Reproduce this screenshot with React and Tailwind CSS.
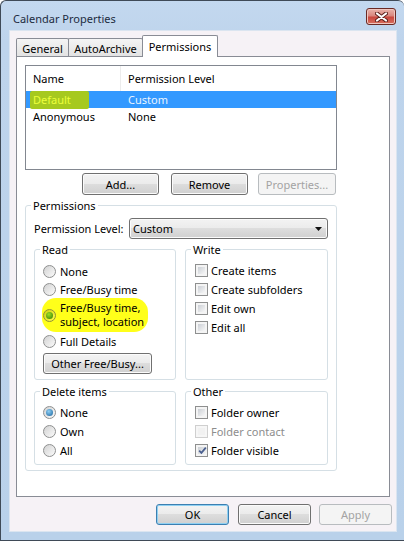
import React from 'react'

function CloseButton() {
  return (
    <div className="mt-[7px] mr-[1px] w-[30px] h-[17px] rounded-[3px] border border-[#6b2a24] bg-[linear-gradient(#e9b3ab_0%,#d9877e_45%,#c9483f_55%,#d8705f_100%)] flex items-center justify-center shadow-[inset_0_0_0_1px_#efc6bf]">
      <svg width="13" height="10" viewBox="0 0 13 10">
        <path d="M2 1.5L11 8.5M11 1.5L2 8.5" stroke="#5a1f1a" strokeWidth="4" strokeLinecap="round" />
        <path d="M2 1.5L11 8.5M11 1.5L2 8.5" stroke="#ffffff" strokeWidth="2.2" strokeLinecap="round" />
      </svg>
    </div>
  )
}

function Button({ children, disabled, isDefault, className = '' }) {
  let look =
    'border-[#707070] bg-[linear-gradient(#f3f3f3_0%,#ebebeb_49%,#dddddd_50%,#d0d0d0_100%)] shadow-[inset_0_0_0_1px_#fbfbfb] text-black'
  if (disabled) look = 'border-[#b8bcbf] bg-[#f4f4f4] text-[#a3a3a3]'
  if (isDefault)
    look =
      'border-[#3c7fb1] bg-[linear-gradient(#f3f3f3_0%,#ebebeb_49%,#dddddd_50%,#d0d0d0_100%)] shadow-[inset_0_0_0_1px_#8fd0f2] text-black'
  return (
    <div className={`flex items-center justify-center rounded-[3px] border ${look} ${className}`}>
      {children}
    </div>
  )
}

function Radio({ checked, tint }) {
  const ring = tint
    ? 'border-[#8e8f3a] bg-[linear-gradient(135deg,#cfcf10,#ffff50)]'
    : 'border-[#8e8f8f] bg-[linear-gradient(135deg,#d2d2d2,#fbfbfb)]'
  const dot = tint
    ? 'bg-[radial-gradient(circle_at_40%_35%,#9ee020,#2f7a08)]'
    : 'bg-[radial-gradient(circle_at_40%_35%,#8fd0f5,#17609a)]'
  return (
    <span className={`w-[13px] h-[13px] shrink-0 rounded-full border flex items-center justify-center ${ring}`}>
      {checked && <span className={`w-[7px] h-[7px] rounded-full ${dot}`} />}
    </span>
  )
}

function Checkbox({ checked, disabled }) {
  return (
    <span
      className={`w-[13px] h-[13px] shrink-0 border p-[2px] flex ${
        disabled ? 'border-[#cfcfcf] bg-[#f6f6f6]' : 'border-[#8e8f8f] bg-[#f4f4f4]'
      }`}
    >
      <span
        className={`flex-1 flex items-center justify-center ${
          disabled ? 'bg-[#f1f1f1]' : 'bg-[linear-gradient(135deg,#cbcfd5,#f7f7f7)]'
        }`}
      >
        {checked && (
          <svg width="9" height="9" viewBox="0 0 9 9" className="shrink-0">
            <path d="M1.2 4.6L3.4 6.9L7.8 1.6" fill="none" stroke="#4a5f8f" strokeWidth="1.7" />
          </svg>
        )}
      </span>
    </span>
  )
}

function Group({ label, className = '', children }) {
  return (
    <fieldset className={`border border-[#d5dfe5] rounded-[3px] ${className}`}>
      <legend className="ml-[5px] px-[2px] leading-[15px]">{label}</legend>
      {children}
    </fieldset>
  )
}

function RadioRow({ label, checked }) {
  return (
    <div className="h-[19px] flex items-center gap-[4px]">
      <Radio checked={checked} />
      <span>{label}</span>
    </div>
  )
}

function CheckRow({ label, checked, disabled }) {
  return (
    <div className={`h-[19px] flex items-center gap-[3px] ${disabled ? 'text-[#8d8d8d]' : ''}`}>
      <Checkbox checked={checked} disabled={disabled} />
      <span>{label}</span>
    </div>
  )
}

export default function App() {
  return (
    <div className="w-[404px] h-[542px] bg-white text-[11px] leading-[15px] text-black font-['Noto_Sans',sans-serif]">
      <div className="h-[541px] flex flex-col border border-r-0 border-[#3f4a57] rounded-t-[6px] bg-[linear-gradient(#c3d8ef,#bed4ec_40px,#b9d1ea)] pl-[8px] pr-[7px] pb-[8px]">
        {/* title bar */}
        <div className="h-[29px] shrink-0 flex items-start justify-between">
          <span className="pl-[4px] pt-[10px] text-[#1c2b3e]">Calendar Properties</span>
          <CloseButton />
        </div>

        {/* client area */}
        <div className="flex-1 flex flex-col border border-[#dbe5f0] bg-[#f6f2f6] pl-[6px] pt-[4px]">
          {/* tabs */}
          <div className="h-[21px] flex items-end">
            <div className="w-[53px] h-[18px] pt-[2px] flex items-center justify-center border border-b-0 border-[#898c95] rounded-t-[2px] bg-[linear-gradient(#f4f4f4,#e3e3e3)]">
              General
            </div>
            <div className="-ml-px w-[75px] h-[18px] pt-[2px] flex items-center justify-center border border-b-0 border-[#898c95] rounded-t-[2px] bg-[linear-gradient(#f4f4f4,#e3e3e3)]">
              AutoArchive
            </div>
            <div className="relative z-10 -ml-px -mb-px w-[76px] h-[22px] flex items-center justify-center border border-b-0 border-[#898c95] rounded-t-[2px] bg-white">
              Permissions
            </div>
          </div>

          {/* tab panel */}
          <div className="w-[374px] h-[441px] border border-[#898c95] bg-white pl-[8px] pt-[8px] flex flex-col">
            {/* list */}
            <div className="w-[312px] h-[105px] border border-[#828790] bg-white">
              <div className="h-[25px] flex items-center">
                <div className="w-[95px] h-full pl-[7px] flex items-center border-r border-[#ececec]">Name</div>
                <div className="pl-[7px]">Permission Level</div>
              </div>
              <div className="h-[17px] flex items-center bg-[#3399ff] text-[#eaf4ff]">
                <div className="w-[95px] pl-[4px] flex items-center">
                  <span className="h-[18px] pl-[3px] pr-[18px] flex items-center bg-[#a6c91f] text-[#ecff3c] rounded-[2px]">
                    Default
                  </span>
                </div>
                <div className="pl-[7px]">Custom</div>
              </div>
              <div className="h-[17px] flex items-center">
                <div className="w-[95px] pl-[7px]">Anonymous</div>
                <div className="pl-[7px]">None</div>
              </div>
            </div>

            {/* list buttons */}
            <div className="w-[312px] mt-[3px] flex justify-end">
              <Button className="w-[77px] h-[22px] mr-[12px]">Add...</Button>
              <Button className="w-[77px] h-[22px] mr-[10px]">Remove</Button>
              <Button disabled className="w-[78px] h-[22px] mr-[1px]">Properties...</Button>
            </div>

            {/* permissions group */}
            <Group label="Permissions" className="w-[312px] mt-[3px]">
              <div className="pb-[5px]">
                <div className="mt-[5px] pl-[8px] flex items-center">
                  <span>Permission Level:</span>
                  <div className="ml-auto mr-[8px] w-[199px] h-[21px] rounded-[3px] border border-[#707070] bg-[linear-gradient(#f3f3f3_0%,#ebebeb_49%,#dddddd_50%,#d0d0d0_100%)] shadow-[inset_0_0_0_1px_#fbfbfb] flex items-center pl-[3px] pr-[5px]">
                    <span>Custom</span>
                    <svg width="7" height="4" viewBox="0 0 7 4" className="ml-auto">
                      <path d="M0 0H7L3.5 4Z" fill="#111" />
                    </svg>
                  </div>
                </div>

                <div className="mt-[3px] ml-[8px] flex gap-[9px]">
                  <Group label="Read" className="w-[142px]">
                    <div className="pl-[8px] pt-[5px] pb-[5px]">
                      <div className="h-[18px] flex items-center gap-[4px]">
                        <Radio />
                        <span>None</span>
                      </div>
                      <div className="h-[18px] flex items-center gap-[4px]">
                        <Radio />
                        <span>Free/Busy time</span>
                      </div>
                      <div className="-ml-[1px] pl-[1px] pr-[4px] py-[3px] w-fit flex items-center gap-[4px] bg-[#ffff1a] rounded-[14px] leading-[14px]">
                        <Radio checked tint />
                        <span>
                          Free/Busy time,
                          <br />
                          subject, location
                        </span>
                      </div>
                      <div className="h-[18px] flex items-center gap-[4px]">
                        <Radio />
                        <span>Full Details</span>
                      </div>
                      <Button className="mt-[3px] w-[109px] h-[21px]">Other Free/Busy...</Button>
                    </div>
                  </Group>
                  <Group label="Write" className="w-[143px]">
                    <div className="pl-[9px] pt-[4px]">
                      <CheckRow label="Create items" />
                      <CheckRow label="Create subfolders" />
                      <CheckRow label="Edit own" />
                      <CheckRow label="Edit all" />
                    </div>
                  </Group>
                </div>

                <div className="mt-[4px] ml-[8px] flex gap-[9px]">
                  <Group label="Delete items" className="w-[142px]">
                    <div className="pl-[8px] pt-[4px] pb-[4px]">
                      <RadioRow label="None" checked />
                      <RadioRow label="Own" />
                      <RadioRow label="All" />
                    </div>
                  </Group>
                  <Group label="Other" className="w-[143px]">
                    <div className="pl-[9px] pt-[4px] pb-[4px]">
                      <CheckRow label="Folder owner" />
                      <CheckRow label="Folder contact" disabled />
                      <CheckRow label="Folder visible" checked />
                    </div>
                  </Group>
                </div>
              </div>
            </Group>
          </div>

          {/* dialog buttons */}
          <div className="w-[376px] mt-[7px] flex justify-end">
            <Button isDefault className="w-[73px] h-[21px] mr-[9px]">OK</Button>
            <Button className="w-[73px] h-[21px] mr-[8px]">Cancel</Button>
            <Button disabled className="w-[73px] h-[21px]">Apply</Button>
          </div>
        </div>
      </div>
    </div>
  )
}
